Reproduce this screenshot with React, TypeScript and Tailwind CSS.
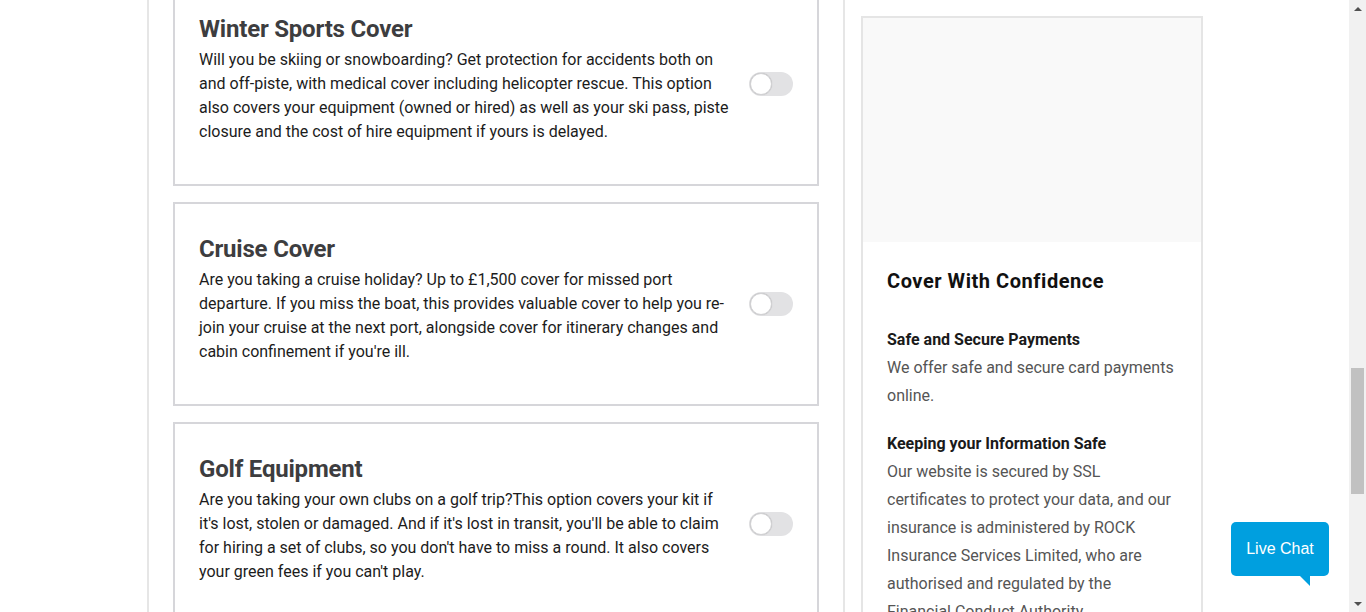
import React from "react";

function Toggle() {
  return (
    <div className="relative h-6 w-11 shrink-0 rounded-full bg-[#e2e2e4]">
      <div className="absolute left-[1px] top-[1px] h-[22px] w-[22px] rounded-full border border-[#d2d2d4] bg-white shadow-[0_0_1px_rgba(0,0,0,0.2)]" />
    </div>
  );
}

function Card({ title, body }: { title: string; body: string }) {
  return (
    <div className="flex gap-5 border-2 border-[#d6d6da] px-6">
      <div className="w-[530px] pb-[40px] pt-[30px]">
        <h2 className="mb-[4px] text-[24px] font-bold leading-[30px] tracking-[-0.2px] text-[#3d3d3f]">
          {title}
        </h2>
        <p className="text-[16px] leading-6 text-[#1c1c1c]">{body}</p>
      </div>
      <div className="flex items-center">
        <Toggle />
      </div>
    </div>
  );
}

export default function App() {
  return (
    <div
      className="relative flex h-[612px] w-[1366px] overflow-hidden bg-white"
      style={{ fontFamily: "Roboto, 'Noto Sans', sans-serif" }}
    >
      <div className="flex pl-[147px]">
        <main className="h-full w-[698px] border-x-2 border-[#e6e6e6] px-6">
          <div className="-mt-[18px] flex flex-col gap-4">
            <Card
              title="Winter Sports Cover"
              body="Will you be skiing or snowboarding? Get protection for accidents both on and off-piste, with medical cover including helicopter rescue. This option also covers your equipment (owned or hired) as well as your ski pass, piste closure and the cost of hire equipment if yours is delayed."
            />
            <Card
              title="Cruise Cover"
              body="Are you taking a cruise holiday? Up to £1,500 cover for missed port departure. If you miss the boat, this provides valuable cover to help you re-join your cruise at the next port, alongside cover for itinerary changes and cabin confinement if you're ill."
            />
            <Card
              title="Golf Equipment"
              body="Are you taking your own clubs on a golf trip?This option covers your kit if it's lost, stolen or damaged. And if it's lost in transit, you'll be able to claim for hiring a set of clubs, so you don't have to miss a round. It also covers your green fees if you can't play."
            />
          </div>
        </main>
        <aside className="ml-4 w-[342px] pt-4">
          <div className="border-2 border-[#e5e5e5]">
            <div className="h-[224px] bg-[#f9f9f9]" />
            <div className="px-6 pt-[25px]">
              <h3 className="text-[20px] font-bold leading-[28px] tracking-[0.55px] text-[#111]">
                Cover With Confidence
              </h3>
              <div className="mt-[31px]">
                <h4 className="text-[16px] font-bold leading-[28px] text-[#1a1a1a]">
                  Safe and Secure Payments
                </h4>
                <p className="text-[16px] leading-[28px] text-[#555]">
                  We offer safe and secure card payments online.
                </p>
              </div>
              <div className="mt-5">
                <h4 className="text-[16px] font-bold leading-[28px] text-[#1a1a1a]">
                  Keeping your Information Safe
                </h4>
                <p className="text-[16px] leading-[28px] text-[#555]">
                  Our website is secured by SSL certificates to protect your data, and our
                  insurance is administered by ROCK Insurance Services Limited, who are
                  authorised and regulated by the Financial Conduct Authority.
                </p>
              </div>
            </div>
          </div>
        </aside>
      </div>

      <div className="relative ml-auto h-full w-[17px] bg-[#f1f1f1]">
        <div className="flex h-[17px] items-center justify-center">
          <div className="h-0 w-0 border-x-[4px] border-b-[4px] border-x-transparent border-b-[#505050]" />
        </div>
        <div className="absolute left-[2px] top-[368px] h-[126px] w-[13px] bg-[#c1c1c1]" />
        <div className="absolute bottom-0 left-0 flex h-[17px] w-full items-center justify-center">
          <div className="h-0 w-0 border-x-[4px] border-t-[4px] border-x-transparent border-t-[#505050]" />
        </div>
      </div>

      <div className="absolute left-[1231px] top-[522px]">
        <div
          className="flex h-[54px] w-[98px] items-center justify-center rounded-[5px] bg-[#009fdf] text-[16px] text-white"
          style={{ fontFamily: "'Liberation Sans', Arial, sans-serif" }}
        >
          Live Chat
        </div>
        <svg className="absolute left-[69px] top-[54px]" width="10" height="10" viewBox="0 0 10 10">
          <polygon points="0,0 10,0 10,10" fill="#009fdf" />
        </svg>
      </div>
    </div>
  );
}
